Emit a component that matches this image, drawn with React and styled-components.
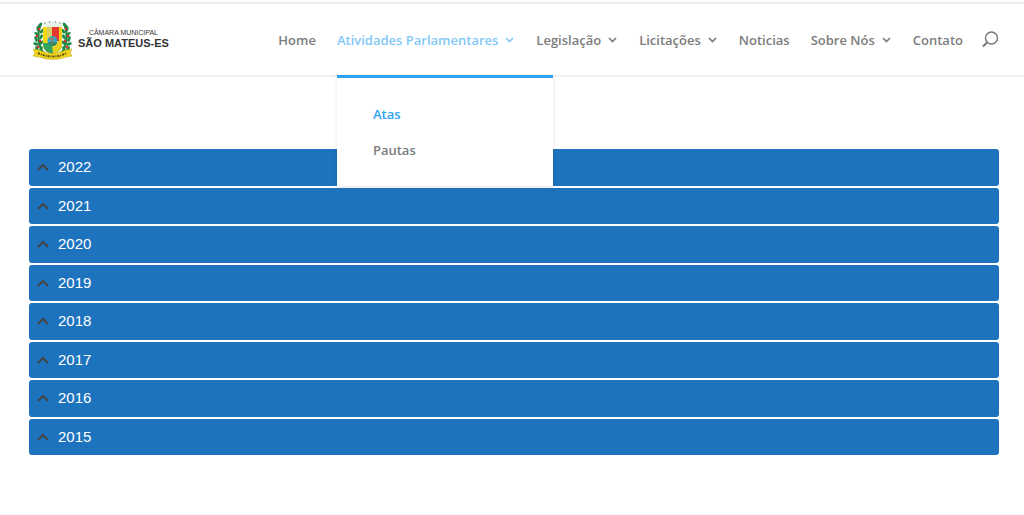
import React from 'react';
import styled, { createGlobalStyle } from 'styled-components';

const menu = [
  { label: 'Home' },
  { label: 'Atividades Parlamentares', arrow: true, sub: ['Atas', 'Pautas'] },
  { label: 'Legislação', arrow: true },
  { label: 'Licitações', arrow: true },
  { label: 'Noticias' },
  { label: 'Sobre Nós', arrow: true },
  { label: 'Contato' },
];

const years = [2022, 2021, 2020, 2019, 2018, 2017, 2016, 2015];

const leaves = [
  [7, 34, 30],
  [5, 30, 60],
  [4, 25, 20],
  [4, 20, 70],
  [5, 15, 30],
  [6, 10, 80],
  [8, 6, 130],
  [9, 30, 110],
  [9, 24, 130],
  [9, 18, 120],
  [10, 12, 130],
];

const Branch = () => (
  <g>
    <path d='M13 35 C5 28 5 14 9 5' fill='none' stroke='#1d7a3c' strokeWidth='2' />
    {leaves.map(([x, y, turn]) => (
      <ellipse
        key={`${x}-${y}`}
        cx={x}
        cy={y}
        rx='3'
        ry='1.5'
        fill='#1f8a45'
        transform={`rotate(${turn} ${x} ${y})`}
      />
    ))}
    <circle cx='7' cy='10' r='1.3' fill='#d8322b' />
    <circle cx='5' cy='17' r='1.3' fill='#d8322b' />
    <circle cx='8' cy='22' r='1.3' fill='#d8322b' />
    <circle cx='6' cy='28' r='1.3' fill='#d8322b' />
  </g>
);

const Crest = () => (
  <svg width='41' height='41' viewBox='0 0 41 41' aria-hidden='true'>
    <Branch />
    <g transform='translate(41 0) scale(-1 1)'>
      <Branch />
    </g>
    <path d='M11 5 Q20.500 0 30 5 L29 9 H12 Z' fill='#e9efe9' />
    <path d='M12 5 L14 3 M17 4 L18 2 M23 2 L24 4 M27 3 L29 5' stroke='#86a58c' />
    <path d='M11 8 H30 V25 Q30 33 20.500 35 Q11 33 11 25 Z' fill='#f5d90f' />
    <path d='M15 8 H20 V22 H15 Z' fill='#d9cf62' />
    <path d='M20 8 H30 V22 H20 Z' fill='#e5392e' />
    <path d='M27 8 H30 V22 H27 Z' fill='#f3cf1b' />
    <path d='M11 24 H30 V25 Q30 33 20.500 35 Q11 33 11 25 Z' fill='#35a45a' />
    <path d='M20 24 H30 V26 Q29 33 21 35 Z' fill='#e7d11a' />
    <circle cx='20.500' cy='22' r='5' fill='#39a3cf' />
    <path d='M16 24 Q20 21 25 24 Q24 27 20.500 27 Q17 27 16 24' fill='#2c8a67' />
    <path d='M17 20 H22 M20 18 V25' stroke='#a8793c' />
    <path
      d='M1 30 L7 31 Q20.500 38 34 31 L40 30 L38 34 L40 37 L34 38 Q20.500 43 7 38 L1 37 L3 34 Z'
      fill='#f2d51b'
      stroke='#b79d1c'
      strokeWidth='0.5'
    />
    <path
      d='M6 34 Q20.500 41 35 34'
      fill='none'
      stroke='#544b16'
      strokeWidth='2'
      strokeDasharray='2 1 1 1'
    />
  </svg>
);

const Chevron = () => (
  <svg width='10' height='6' viewBox='0 0 10 6' aria-hidden='true'>
    <path d='M1 1 L4.500 4.500 L8 1' fill='none' stroke='currentColor' strokeWidth='1.700' />
  </svg>
);

const App = () => {
  return (
    <>
      <GlobalStyle />
      <Header>
        <Logo href='#home'>
          <Crest />
          <LogoText>
            <span>CÂMARA MUNICIPAL</span>
            <strong>SÃO MATEUS-ES</strong>
          </LogoText>
        </Logo>
        <Nav aria-label='Principal'>
          <Menu>
            {menu.map(({ label, arrow, sub }) => (
              <MenuItem key={label}>
                <MenuLink href='#menu' $active={Boolean(sub)}>
                  {label}
                  {arrow && <Chevron />}
                </MenuLink>
                {sub && (
                  <SubMenu>
                    {sub.map((item, index) => (
                      <li key={item}>
                        <SubLink href='#submenu' $active={index === 0}>
                          {item}
                        </SubLink>
                      </li>
                    ))}
                  </SubMenu>
                )}
              </MenuItem>
            ))}
          </Menu>
          <SearchButton type='button' aria-label='Pesquisar'>
            <svg width='17' height='17' viewBox='0 0 17 17' aria-hidden='true'>
              <g fill='none' stroke='currentColor'>
                <circle cx='9.500' cy='7' r='6' strokeWidth='1.400' />
                <path d='M5 11.500 L1 15.500' strokeWidth='2' />
              </g>
            </svg>
          </SearchButton>
        </Nav>
      </Header>
      <YearList>
        {years.map((year) => (
          <YearButton type='button' key={year}>
            <svg width='12' height='8' viewBox='0 0 12 8' aria-hidden='true'>
              <path d='M1 7 L6 2 L11 7' fill='none' stroke='#444' strokeWidth='2' />
            </svg>
            {year}
          </YearButton>
        ))}
      </YearList>
    </>
  );
};

const GlobalStyle = createGlobalStyle`
  * {
    box-sizing: border-box;
  }
  body {
    margin: 0;
    padding-top: 2px;
    background: #fff;
    font-family: 'Open Sans', sans-serif;
  }
  a {
    text-decoration: none;
  }
  ul {
    margin: 0;
    padding: 0;
    list-style: none;
  }
`;

const Header = styled.header`
  display: flex;
  align-items: center;
  justify-content: space-between;
  height: 75px;
  padding: 0 25px 0 32px;
  border-top: 2px solid #ededed;
  border-bottom: 2px solid #f0f0f0;
`;

const Logo = styled.a`
  display: flex;
  align-items: center;
  gap: 5px;
  color: #333;
`;

const LogoText = styled.span`
  display: flex;
  flex-direction: column;
  align-items: center;
  padding-bottom: 2px;
  font-family: 'Liberation Sans', sans-serif;
  white-space: nowrap;
  span {
    font-size: 7px;
    line-height: 8px;
  }
  strong {
    font-size: 11px;
    line-height: 12px;
  }
`;

const Nav = styled.nav`
  display: flex;
  align-items: center;
  gap: 19px;
  height: 100%;
`;

const Menu = styled.ul`
  display: flex;
  gap: 21px;
  height: 100%;
`;

const MenuItem = styled.li`
  position: relative;
  display: flex;
  align-items: center;
`;

const MenuLink = styled.a`
  display: flex;
  align-items: center;
  gap: 7px;
  color: ${({ $active }) => ($active ? '#82c8f7' : '#7c7c7c')};
  font-size: 13px;
  font-weight: 600;
  line-height: 18px;
  white-space: nowrap;
`;

const SubMenu = styled.ul`
  position: absolute;
  top: 100%;
  left: 0;
  z-index: 10;
  width: 216px;
  padding: 18px 36px;
  background: #fff;
  border-top: 3px solid #2ea3f2;
  box-shadow: 0 2px 5px rgba(0, 0, 0, 0.1);
`;

const SubLink = styled.a`
  display: block;
  color: ${({ $active }) => ($active ? '#2ea3f2' : '#7c7c7c')};
  font-size: 13px;
  font-weight: 600;
  line-height: 36px;
`;

const SearchButton = styled.button`
  display: flex;
  padding: 0;
  border: none;
  background: none;
  color: #777;
`;

const YearList = styled.main`
  display: grid;
  grid-auto-rows: 1fr;
  gap: 2px;
  min-height: 306px;
  margin: 72px 25px 60px 29px;
`;

const YearButton = styled.button`
  display: flex;
  align-items: center;
  gap: 9px;
  padding: 0 8px;
  border: none;
  border-radius: 3px;
  background: #1e73be;
  color: #fff;
  font-family: 'Liberation Sans', sans-serif;
  font-size: 15px;
  line-height: 20px;
  text-align: left;
`;

export default App;
